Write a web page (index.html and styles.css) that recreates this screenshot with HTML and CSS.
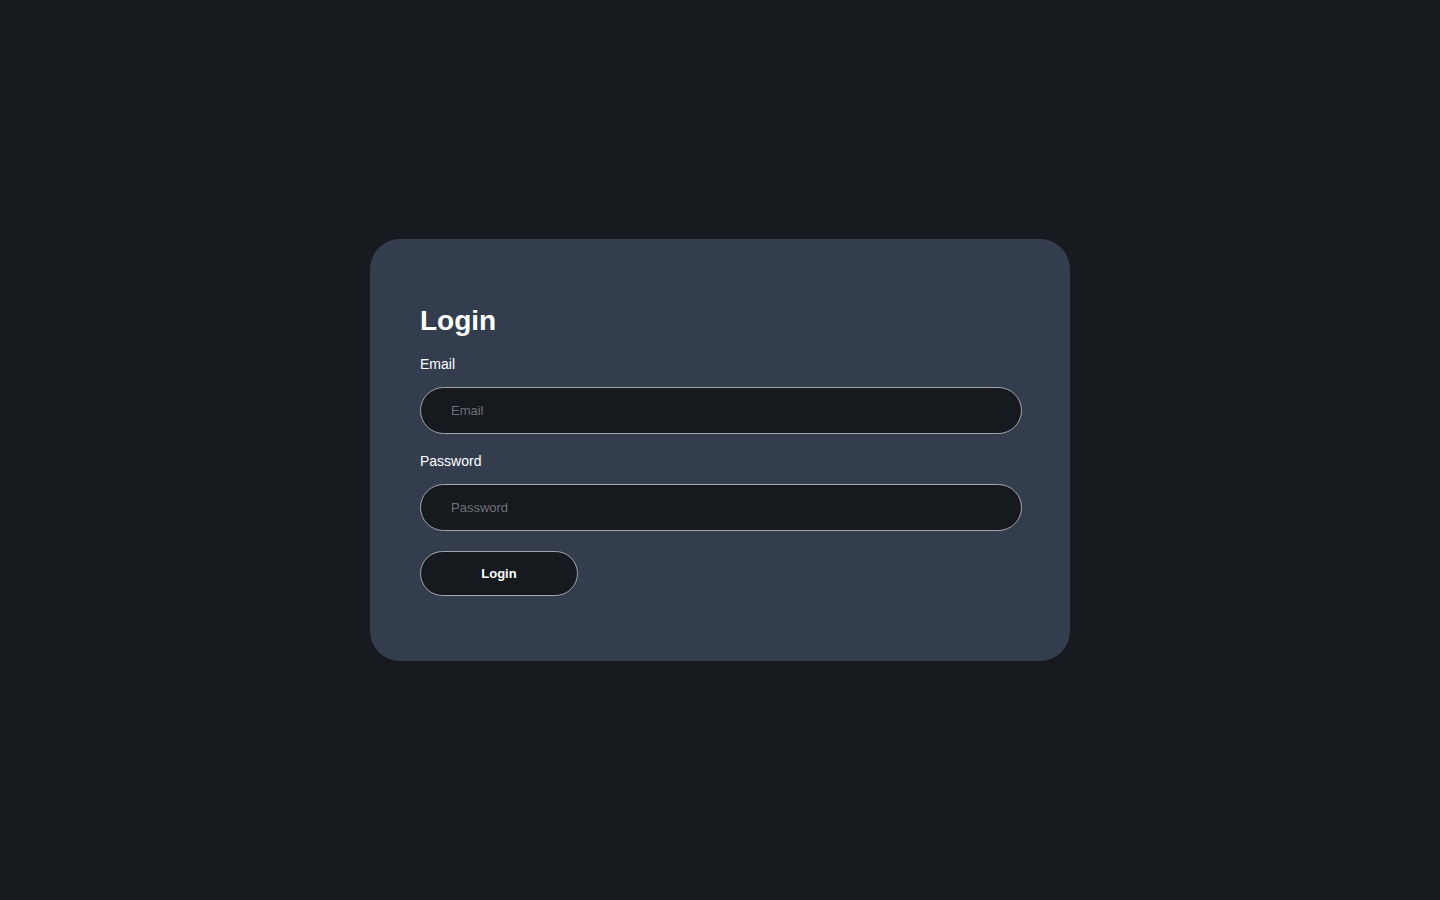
FILE: index.html
```html
<!DOCTYPE html>
<html lang="en">
<head>
<meta charset="utf-8">
<title>Login</title>
<link rel="stylesheet" href="styles.css">
</head>
<body>
<main class="page">
  <form class="card">
    <h1 class="title">Login</h1>
    <label class="label" for="email">Email</label>
    <input class="field" id="email" type="email" placeholder="Email">
    <label class="label" for="password">Password</label>
    <input class="field" id="password" type="password" placeholder="Password">
    <button class="btn" type="button">Login</button>
  </form>
</main>
</body>
</html>
```
FILE: styles.css
```css
html, body {
  margin: 0;
  padding: 0;
  height: 100%;
}
body {
  background: #171a1f;
  font-family: "Liberation Sans", Arial, sans-serif;
  color: #ffffff;
}
.page {
  height: 100vh;
  display: flex;
  align-items: center;
  justify-content: center;
}
.card {
  width: 700px;
  box-sizing: border-box;
  background: #343d4e;
  border-radius: 30px;
  padding: 66px 50px 65px;
  display: flex;
  flex-direction: column;
  align-items: flex-start;
}
.title {
  margin: 0;
  font-size: 28px;
  line-height: 32px;
  font-weight: 700;
}
.label {
  margin-top: 19px;
  font-size: 14px;
  line-height: 16px;
}
.label + .field {
  margin-top: 15px;
}
.field + .label {
  margin-top: 19px;
}
.field {
  width: 602px;
  height: 47px;
  box-sizing: border-box;
  background: #16191d;
  border: 1px solid #a3a6ab;
  border-radius: 24px;
  padding: 0 30px;
  font-family: "Liberation Sans", Arial, sans-serif;
  font-size: 13px;
  color: #ffffff;
  outline: none;
}
.field::placeholder {
  color: #6e7177;
}
.btn {
  margin-top: 20px;
  width: 158px;
  height: 45px;
  box-sizing: border-box;
  background: #16191d;
  border: 1px solid #a3a6ab;
  border-radius: 23px;
  color: #ffffff;
  font-family: "Liberation Sans", Arial, sans-serif;
  font-size: 13px;
  font-weight: 700;
  cursor: pointer;
}
```
